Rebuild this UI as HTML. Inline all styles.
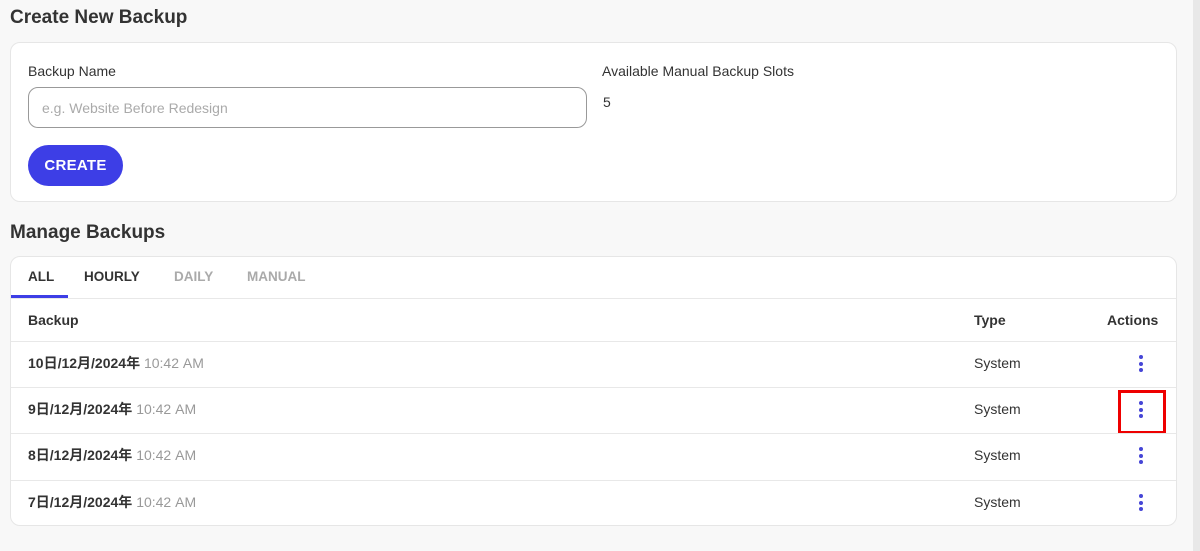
<!DOCTYPE html>
<html><head><meta charset="utf-8"><style>
*{box-sizing:border-box;margin:0;padding:0}
body{width:1200px;height:551px;background:#f8f8f8;font-family:"Liberation Sans","Noto Sans CJK JP",sans-serif;color:#333;position:relative;overflow:hidden}
.sb{position:absolute;right:0;top:0;width:7px;height:551px;background:#e8e8e8}
h2{position:absolute;left:10px;font-size:19px;font-weight:bold;color:#333}
.card{position:absolute;left:10px;width:1167px;background:#fff;border:1px solid #e6e6e6;border-radius:10px}
.lbl{position:absolute;font-size:14px;color:#333}
.inp{position:absolute;left:17px;top:44px;width:559px;height:41px;border:1px solid #999;border-radius:10px;font-size:14px;color:#aaa;padding:12px 0 0 13px}
.btn{position:absolute;left:17px;top:102px;width:95px;height:41px;border-radius:21px;background:#3d3ee6;color:#fff;font-weight:bold;font-size:15px;text-align:center;line-height:41px;letter-spacing:.3px}
.tab{position:absolute;top:12px;font-size:13.5px;font-weight:bold}
.row{position:absolute;left:0;width:1165px;border-top:1px solid #e8e8e8;font-size:14px;line-height:18px}
.row span{position:absolute;line-height:18px}
.d{position:absolute;left:1128px;width:4px;height:17px}
.d i{display:block;width:4px;height:4px;border-radius:2px;background:#4646d6;margin-bottom:2.5px}
</style></head><body>
<div class="sb"></div>
<h2 style="top:7px">Create New Backup</h2>
<div class="card" style="top:42px;height:160px">
<div class="lbl" style="left:17px;top:20px">Backup Name</div>
<div class="inp">e.g. Website Before Redesign</div>
<div class="btn">CREATE</div>
<div class="lbl" style="left:591px;top:20px">Available Manual Backup Slots</div>
<div class="lbl" style="left:592px;top:51px">5</div>
</div>
<h2 style="top:222px">Manage Backups</h2>
<div class="card" style="top:256px;height:270px;overflow:hidden">
<div class="tab" style="left:17px">ALL</div>
<div class="tab" style="left:73px">HOURLY</div>
<div class="tab" style="left:163px;color:#aaa">DAILY</div>
<div class="tab" style="left:236px;color:#aaa">MANUAL</div>
<div style="position:absolute;left:0;top:38px;width:57px;height:3px;background:#3d3ee6"></div>
<div class="row" style="top:41px;height:43px;font-weight:bold"><span style="left:17px;top:12px">Backup</span><span style="left:963px;top:12px">Type</span><span style="left:1096px;top:12px">Actions</span></div>
<div class="row" style="top:84px;height:46px"><span style="left:17px;top:12px"><b>10日/12月/2024年</b> <span style="position:static;color:#999">10:42 AM</span></span><span style="left:963px;top:12px">System</span><div class="d" style="top:13px"><i></i><i></i><i></i></div></div>
<div class="row" style="top:130px;height:46px"><span style="left:17px;top:12px"><b>9日/12月/2024年</b> <span style="position:static;color:#999">10:42 AM</span></span><span style="left:963px;top:12px">System</span><div class="d" style="top:13px"><i></i><i></i><i></i></div><div style="position:absolute;left:1107px;top:2px;width:48px;height:44px;border:3px solid #e00"></div></div>
<div class="row" style="top:176px;height:47px"><span style="left:17px;top:12px"><b>8日/12月/2024年</b> <span style="position:static;color:#999">10:42 AM</span></span><span style="left:963px;top:12px">System</span><div class="d" style="top:13px"><i></i><i></i><i></i></div></div>
<div class="row" style="top:223px;height:46px"><span style="left:17px;top:12px"><b>7日/12月/2024年</b> <span style="position:static;color:#999">10:42 AM</span></span><span style="left:963px;top:12px">System</span><div class="d" style="top:13px"><i></i><i></i><i></i></div></div>
</div>
</body></html>
